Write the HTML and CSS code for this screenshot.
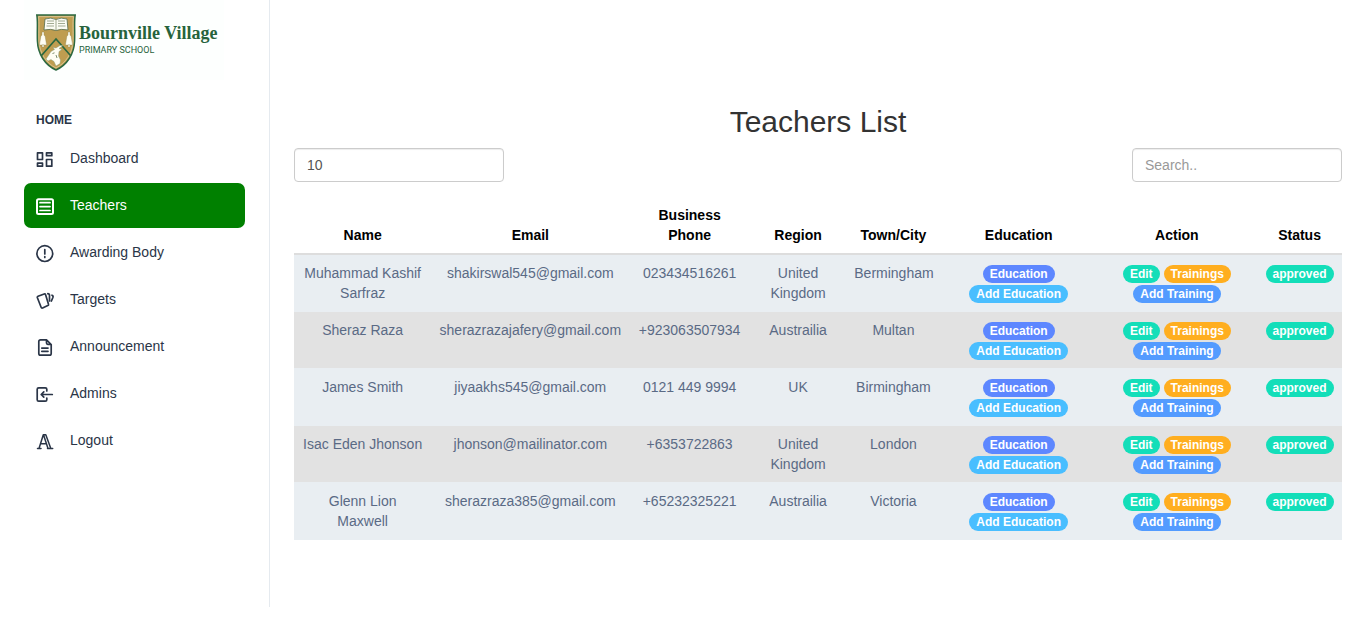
FILE: index.html
```html
<!DOCTYPE html>
<html lang="en">
<head>
<meta charset="utf-8">
<meta name="viewport" content="width=device-width, initial-scale=1">
<title>Teachers List</title>
<link rel="stylesheet" href="styles.css">
</head>
<body>
<div class="page">
  <aside class="sidebar">
    <a class="logo" href="#">
      <svg class="crest" viewBox="0 0 40 57" aria-hidden="true">
        <path d="M.8 1H39.2C38 7 39 15 38.600 27C38.200 40 31 51 20 56C9 51 1.800 40 1.400 27C1 15 2 7 .8 1Z" fill="#bf9d50" stroke="#2b6840" stroke-width="1.500"/>
        <path d="M2.600 2.600H37.400C36.600 9 37.400 16 37 27C36.400 39 30 49 20 54C10 49 3.600 39 3 27C2.600 16 3.400 9 2.600 2.600Z" fill="none" stroke="#e8dcb8" stroke-width=".6"/>
        <path d="M9 5Q15 3 20 5.500Q25 3 31 5L32 16Q25 14.500 20 16.500Q15 14.500 8 16Z" fill="#fbfcf3" stroke="#526b4c" stroke-width=".8"/>
        <path d="M20 5.500V16.500M11 7H18M11 9.500H18M10.500 12H18M22 7H29M22 9.500H29M22 12H29.500" fill="none" stroke="#8b9677" stroke-width=".8"/>
        <path d="M6 18H8V21Q9.600 22 9.600 25L10.600 31H3.400L4.400 25Q4.400 22 6 21ZM32 18H34V21Q35.600 22 35.600 25L36.600 31H29.400L30.400 25Q30.400 22 32 21Z" fill="#fffef3" stroke="#8d8754" stroke-width=".4"/>
        <path d="M6 31H8V33H6ZM32 31H34V33H32Z" fill="#fffef3" stroke="#8d8754" stroke-width=".4"/>
        <path d="M5.500 41.500L20 25L34.500 41.500" fill="none" stroke="#2b6840" stroke-width="1.700"/>
        <path d="M10 45L15 37.500L18.500 35.500L17 33.500L20 34L24 31.500H27L23 34.500L26 35.500L23 37.500L22.500 42L24.500 46L24 49.500L20 52L18 47.500L15 45.500L12 47Z" fill="#fffef3" stroke="#7f9a78" stroke-width=".4"/>
        <path d="M16.500 39.500L18.500 38.800M20 41L21 44" fill="none" stroke="#58714d" stroke-width=".8"/>
      </svg>
      <span class="brand">
        <span class="brand-name">Bournville Village</span>
        <span class="brand-type">PRIMARY SCHOOL</span>
      </span>
    </a>
    <nav class="menu" aria-label="Main">
      <h2 class="menu-title">HOME</h2>
      <a class="menu-item" href="#">
        <svg class="icon" viewBox="0 0 19 21" aria-hidden="true"><path d="M1.500 4.800H6.500V11.500H1.500ZM1.500 15.200H6.500V18.200H1.500ZM10.500 4.800H15.800V7.700H10.500ZM10.500 11.500H15.800V18.200H10.500Z"/></svg>
        <span class="label">Dashboard</span></a>
      <a class="menu-item active" href="#" aria-current="page">
        <svg class="icon" viewBox="0 0 19 21" aria-hidden="true"><rect x="1" y="4.200" width="16" height="14.800" rx="1.500" stroke-width="2"/><path d="M4 7.700H14M4 11.600H14M4 15.500H14"/></svg>
        <span class="label">Teachers</span></a>
      <a class="menu-item" href="#">
        <svg class="icon" viewBox="0 0 19 21" aria-hidden="true"><circle cx="8.800" cy="11.600" r="7.900"/><path d="M8.800 7.600V12M8.800 14.500V15.500"/></svg>
        <span class="label">Awarding Body</span></a>
      <a class="menu-item" href="#">
        <svg class="icon" viewBox="0 0 19 21" aria-hidden="true"><path d="M2 7.300L8.200 5Q9.200 4.700 9.600 5.700L12.500 15.200Q12.800 16.100 11.800 16.600L6.600 19Q5.500 19.300 5.100 18.300L1.400 8.800Q1 7.700 2 7.300Z"/><path d="M11.800 4.700Q13.500 4.700 13.500 6.500V12M16 6.200Q17.500 6.800 16.900 8.500L15.400 12"/></svg>
        <span class="label">Targets</span></a>
      <a class="menu-item" href="#">
        <svg class="icon" viewBox="0 0 19 21" aria-hidden="true"><path d="M10.500 3.900V7Q10.500 8.300 11.800 8.300H15M10.500 3.900H4.500Q2.800 3.900 2.800 5.600V17.500Q2.800 19.200 4.500 19.200H13.500Q15.200 19.200 15.200 17.500V8.500ZM5.800 12.100H12M5.800 15.300H12"/></svg>
        <span class="label">Announcement</span></a>
      <a class="menu-item" href="#">
        <svg class="icon" viewBox="0 0 19 21" aria-hidden="true"><path d="M10.800 8V6.300Q10.800 4.800 9.300 4.800H2.700Q1.200 4.800 1.200 6.300V16.700Q1.200 18.200 2.700 18.200H9.300Q10.800 18.200 10.800 16.700V15M16.300 11.500H5.200M7.800 8.900L5.200 11.500L7.800 14.100"/></svg>
        <span class="label">Admins</span></a>
      <a class="menu-item" href="#">
        <svg class="icon" viewBox="0 0 19 21" aria-hidden="true"><path d="M1.500 18.500H5M11.500 18.500H16.700M3 18.500L7.300 4.800H9.800L14.800 18.500M7.500 4.800L12 18.500M4.700 13.800H10.200" stroke-width="1.500"/></svg>
        <span class="label">Logout</span></a>
    </nav>
  </aside>
  <main class="content">
    <h1 class="title">Teachers List</h1>
    <div class="toolbar">
      <select class="field" aria-label="Rows per page"><option>10</option><option>25</option><option>50</option></select>
      <input class="field" type="search" placeholder="Search.." aria-label="Search teachers">
    </div>
    <table class="teachers">
      <colgroup><col class="c-name"><col class="c-email"><col class="c-phone"><col class="c-region"><col class="c-town"><col class="c-education"><col class="c-action"><col class="c-status"></colgroup>
      <thead>
        <tr><th>Name</th><th>Email</th><th>Business Phone</th><th>Region</th><th>Town/City</th><th>Education</th><th>Action</th><th>Status</th></tr>
      </thead>
      <tbody>
        <tr><td>Muhammad Kashif Sarfraz</td><td>shakirswal545@gmail.com</td><td>023434516261</td><td>United Kingdom</td><td>Bermingham</td>
          <td><div class="badges"><a class="badge indigo" href="#">Education</a><a class="badge sky" href="#">Add Education</a></div></td>
          <td><div class="badges"><a class="badge teal" href="#">Edit</a><a class="badge amber" href="#">Trainings</a><a class="badge blue" href="#">Add Training</a></div></td>
          <td><div class="badges"><span class="badge teal">approved</span></div></td></tr>
        <tr><td>Sheraz Raza</td><td>sherazrazajafery@gmail.com</td><td>+923063507934</td><td>Austrailia</td><td>Multan</td>
          <td><div class="badges"><a class="badge indigo" href="#">Education</a><a class="badge sky" href="#">Add Education</a></div></td>
          <td><div class="badges"><a class="badge teal" href="#">Edit</a><a class="badge amber" href="#">Trainings</a><a class="badge blue" href="#">Add Training</a></div></td>
          <td><div class="badges"><span class="badge teal">approved</span></div></td></tr>
        <tr><td>James Smith</td><td>jiyaakhs545@gmail.com</td><td>0121 449 9994</td><td>UK</td><td>Birmingham</td>
          <td><div class="badges"><a class="badge indigo" href="#">Education</a><a class="badge sky" href="#">Add Education</a></div></td>
          <td><div class="badges"><a class="badge teal" href="#">Edit</a><a class="badge amber" href="#">Trainings</a><a class="badge blue" href="#">Add Training</a></div></td>
          <td><div class="badges"><span class="badge teal">approved</span></div></td></tr>
        <tr><td>Isac Eden Jhonson</td><td>jhonson@mailinator.com</td><td>+6353722863</td><td>United Kingdom</td><td>London</td>
          <td><div class="badges"><a class="badge indigo" href="#">Education</a><a class="badge sky" href="#">Add Education</a></div></td>
          <td><div class="badges"><a class="badge teal" href="#">Edit</a><a class="badge amber" href="#">Trainings</a><a class="badge blue" href="#">Add Training</a></div></td>
          <td><div class="badges"><span class="badge teal">approved</span></div></td></tr>
        <tr><td>Glenn Lion Maxwell</td><td>sherazraza385@gmail.com</td><td>+65232325221</td><td>Austrailia</td><td>Victoria</td>
          <td><div class="badges"><a class="badge indigo" href="#">Education</a><a class="badge sky" href="#">Add Education</a></div></td>
          <td><div class="badges"><a class="badge teal" href="#">Edit</a><a class="badge amber" href="#">Trainings</a><a class="badge blue" href="#">Add Training</a></div></td>
          <td><div class="badges"><span class="badge teal">approved</span></div></td></tr>
      </tbody>
    </table>
  </main>
</div>
</body>
</html>
```

FILE: styles.css
```css
* { box-sizing: border-box; }

body {
  margin: 0;
  background: #fff;
  color: #5a6a85;
  font: 14px/20px "Liberation Sans", Arial, sans-serif;
}

.page {
  display: flex;
  align-items: flex-start;
}

.sidebar {
  flex: none;
  width: 270px;
  min-height: calc(100vh - 22px);
  padding: 0 24px;
  border-right: 1px solid #e5eaef;
}

.logo {
  display: flex;
  gap: 3px;
  width: 200px;
  height: 80px;
  padding: 14px 0 0 12px;
  background: #fdfffe;
  color: #27633c;
  text-decoration: none;
}

.crest {
  flex: none;
  width: 40px;
  height: 57px;
}

.brand {
  display: flex;
  flex-direction: column;
  padding-top: 9px;
  white-space: nowrap;
}

.brand-name {
  font: bold 18px/20px "Liberation Serif", "Times New Roman", serif;
}

.brand-type {
  font: 9px/14px Roboto, sans-serif;
}

.menu {
  display: flex;
  flex-direction: column;
  gap: 2px;
  padding-top: 30px;
}

.menu-title {
  margin: 0 0 4px;
  padding: 0 12px;
  color: #2a3547;
  font-size: 12px;
  line-height: 20px;
}

.menu-item {
  display: flex;
  align-items: center;
  gap: 15px;
  height: 45px;
  padding: 0 12px;
  border-radius: 7px;
  color: #2a3547;
  text-decoration: none;
}

.menu-item.active {
  background: #008000;
  color: #fff;
}

.label {
  padding-bottom: 2px;
}

.icon {
  flex: none;
  width: 19px;
  height: 21px;
  fill: none;
  stroke: currentColor;
  stroke-width: 1.7;
  stroke-linecap: round;
  stroke-linejoin: round;
}

.content {
  flex: 1;
  min-width: 0;
  padding: 105px 24px 24px;
}

.title {
  margin: 0 0 10px;
  color: #333;
  font-size: 30px;
  font-weight: 400;
  line-height: 33px;
  text-align: center;
}

.toolbar {
  display: flex;
  justify-content: space-between;
  margin-bottom: 15px;
}

.field {
  appearance: none;
  width: 210px;
  height: 34px;
  padding: 6px 12px;
  border: 1px solid #ccc;
  border-radius: 4px;
  background: #fff;
  box-shadow: inset 0 1px 1px rgba(0, 0, 0, .075);
  color: #555;
  font: inherit;
}

.field::placeholder {
  color: #999;
  opacity: 1;
}

.teachers {
  width: 100%;
  border-collapse: collapse;
  table-layout: fixed;
  text-align: center;
}

.c-name { width: 13.1%; }
.c-email { width: 18.9%; }
.c-phone { width: 11.5%; }
.c-region { width: 9.2%; }
.c-town { width: 9%; }
.c-education { width: 14.9%; }
.c-action { width: 15.3%; }
.c-status { width: 8.1%; }

.teachers th {
  padding: 8px;
  border-bottom: 2px solid #ddd;
  color: #000;
  vertical-align: bottom;
}

.teachers td {
  padding: 8px;
  border-top: 1px solid #e9eef2;
  vertical-align: top;
}

.teachers tbody tr:first-child td {
  border-top: 0;
}

.teachers tbody tr:nth-child(odd) {
  background: #e9eef2;
}

.teachers tbody tr:nth-child(even) {
  background: #e2e2e2;
}

.teachers tbody tr:last-child td {
  border-bottom: 1px solid #e9eef2;
}

.badges {
  display: flex;
  flex-wrap: wrap;
  justify-content: center;
  gap: 2px 4px;
  padding-top: 2px;
}

.badge {
  padding: 3px 7px;
  border-radius: 10px;
  color: #fff;
  font-size: 12px;
  font-weight: 700;
  line-height: 12px;
  text-decoration: none;
  white-space: nowrap;
}

.indigo { background: #5d87ff; }
.sky { background: #49beff; }
.teal { background: #13deb9; }
.amber { background: #ffae1f; }
.blue { background: #539bff; }
```
